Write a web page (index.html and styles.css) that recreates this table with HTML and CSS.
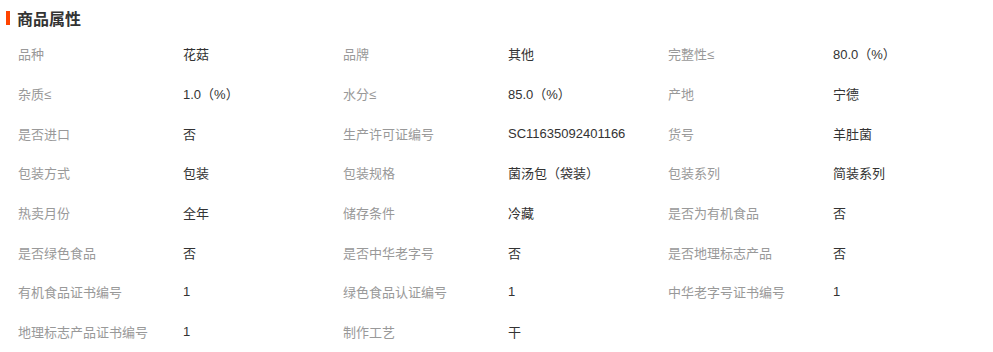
FILE: index.html
```html
<!DOCTYPE html>
<html lang="zh-CN">
<head>
<meta charset="utf-8">
<link rel="stylesheet" href="styles.css">
</head>
<body>
<div class="panel">
  <div class="head"><span class="mark"></span><h2 class="title">商品属性</h2></div>
  <div class="grid">
    <div class="k">品种</div><div class="v">花菇</div>
    <div class="k">品牌</div><div class="v">其他</div>
    <div class="k">完整性≤</div><div class="v">80.0（%）</div>

    <div class="k">杂质≤</div><div class="v">1.0（%）</div>
    <div class="k">水分≤</div><div class="v">85.0（%）</div>
    <div class="k">产地</div><div class="v">宁德</div>

    <div class="k">是否进口</div><div class="v">否</div>
    <div class="k">生产许可证编号</div><div class="v">SC11635092401166</div>
    <div class="k">货号</div><div class="v">羊肚菌</div>

    <div class="k">包装方式</div><div class="v">包装</div>
    <div class="k">包装规格</div><div class="v">菌汤包（袋装）</div>
    <div class="k">包装系列</div><div class="v">简装系列</div>

    <div class="k">热卖月份</div><div class="v">全年</div>
    <div class="k">储存条件</div><div class="v">冷藏</div>
    <div class="k">是否为有机食品</div><div class="v">否</div>

    <div class="k">是否绿色食品</div><div class="v">否</div>
    <div class="k">是否中华老字号</div><div class="v">否</div>
    <div class="k">是否地理标志产品</div><div class="v">否</div>

    <div class="k">有机食品证书编号</div><div class="v">1</div>
    <div class="k">绿色食品认证编号</div><div class="v">1</div>
    <div class="k">中华老字号证书编号</div><div class="v">1</div>

    <div class="k">地理标志产品证书编号</div><div class="v">1</div>
    <div class="k">制作工艺</div><div class="v">干</div>
  </div>
</div>
</body>
</html>
```

FILE: styles.css
```css
html, body {
  margin: 0;
  padding: 0;
  background: #ffffff;
}
body {
  font-family: "Liberation Sans", "Noto Sans CJK SC", sans-serif;
  color: #333333;
}
.panel {
  width: 993px;
}
.head {
  display: flex;
  align-items: center;
  height: 35px;
  padding-left: 6px;
}
.mark {
  display: block;
  width: 4px;
  height: 14px;
  background: #ff4400;
  margin-right: 7px;
}
.title {
  margin: 0;
  font-size: 16px;
  font-weight: bold;
  color: #333333;
  font-family: "Noto Sans CJK SC", sans-serif;
}
.grid {
  display: grid;
  grid-template-columns: 165px 160px 165px 160px 165px 160px;
  grid-auto-rows: 39.7px;
  padding-left: 18px;
  margin-top: -1px;
  font-size: 13px;
  font-family: "Liberation Sans", "Noto Sans CJK SC", sans-serif;
}
.k, .v {
  display: flex;
  align-items: center;
  white-space: nowrap;
}
.k {
  color: #999999;
}
.v {
  color: #333333;
}
```
